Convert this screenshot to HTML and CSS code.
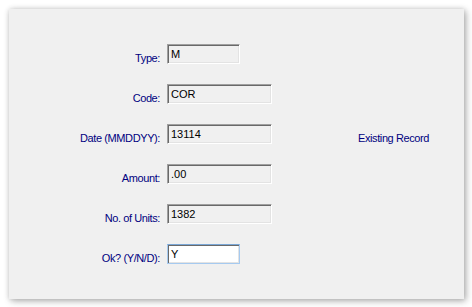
FILE: index.html
```html
<!DOCTYPE html>
<html>
<head>
<meta charset="utf-8">
<link rel="stylesheet" href="styles.css">
</head>
<body>
<div class="panel">
  <div class="form">
    <label class="lbl">Type:</label>
    <div class="field short">M</div>
    <div></div>

    <label class="lbl">Code:</label>
    <div class="field">COR</div>
    <div></div>

    <label class="lbl">Date (MMDDYY):</label>
    <div class="field">13114</div>
    <div class="status">Existing Record</div>

    <label class="lbl">Amount:</label>
    <div class="field">.00</div>
    <div></div>

    <label class="lbl">No. of Units:</label>
    <div class="field">1382</div>
    <div></div>

    <label class="lbl">Ok? (Y/N/D):</label>
    <div class="field short active">Y</div>
    <div></div>
  </div>
</div>
</body>
</html>
```

FILE: styles.css
```css
html, body {
  margin: 0;
  padding: 0;
  background: #ffffff;
}
body {
  width: 472px;
  height: 307px;
  font-family: "Liberation Sans", Arial, sans-serif;
  font-size: 11px;
  letter-spacing: -0.4px;
}
.panel {
  margin: 9px 0 0 9px;
  width: 455px;
  height: 290px;
  background: #f0f0f0;
  box-shadow: 2px 2px 7px rgba(0,0,0,0.3), 0 0 5px rgba(0,0,0,0.12);
}
.form {
  display: grid;
  grid-template-columns: 151px 105px 1fr;
  grid-auto-rows: 20px;
  row-gap: 20px;
  column-gap: 7px;
  padding-top: 35px;
}
.lbl {
  color: #000080;
  text-align: right;
  align-self: end;
  line-height: 13px;
  margin-bottom: -1px;
}
.field {
  box-sizing: border-box;
  height: 20px;
  width: 105px;
  border-top: 1px solid #a0a0a0;
  border-left: 1px solid #a0a0a0;
  border-right: 1px solid #ffffff;
  border-bottom: 1px solid #ffffff;
  box-shadow: inset 1px 1px 0 #696969, inset -1px -1px 0 #e3e3e3;
  background: #f0f0f0;
  color: #000;
  padding-left: 3px;
  line-height: 18px;
  letter-spacing: 0;
}
.field.short {
  width: 73px;
}
.field.active {
  background: #ffffff;
  border-right-color: #a6caf0;
  border-bottom-color: #a6caf0;
  border-top-color: #7aa7d6;
  border-left-color: #a6caf0;
}
.status {
  color: #000080;
  margin-left: 79px;
  align-self: end;
  line-height: 13px;
  margin-bottom: -1px;
}
```
